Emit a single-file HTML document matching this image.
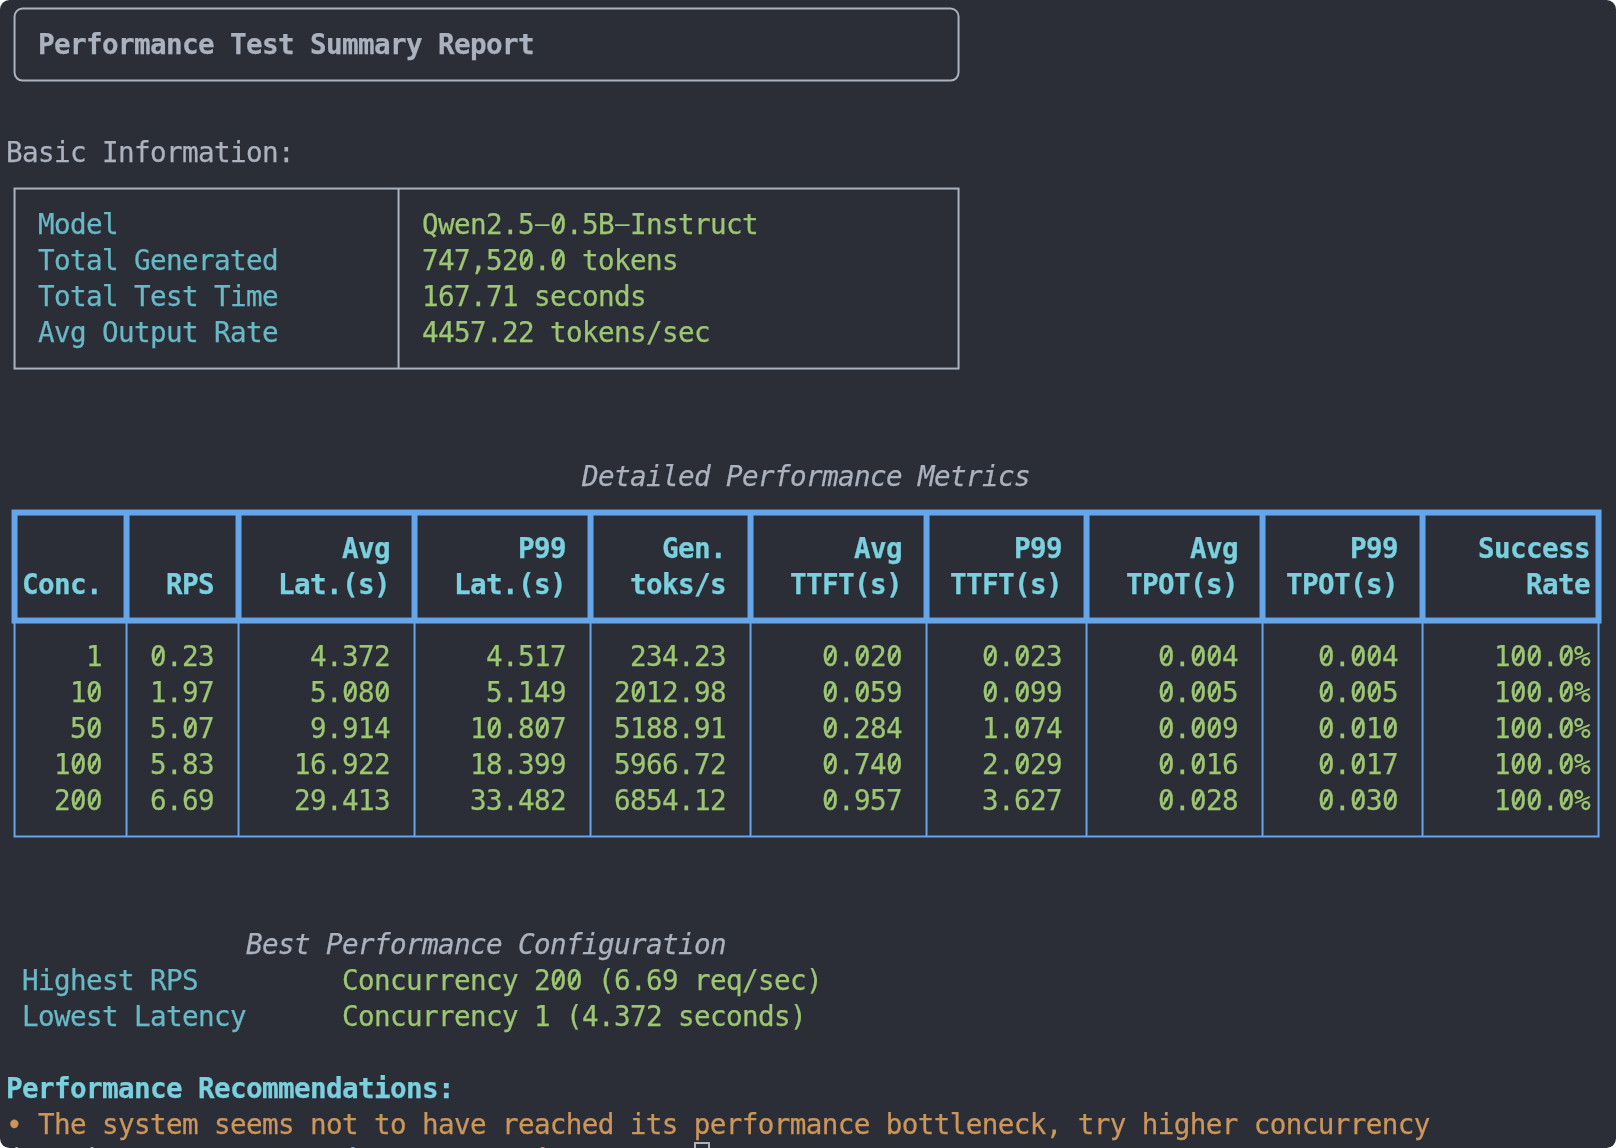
<!DOCTYPE html>
<html><head><meta charset="utf-8"><title>Performance Test Summary Report</title>
<style>
html,body{margin:0;padding:0;background:#fff;overflow:hidden;}
#term{position:absolute;left:0;top:0;width:1616px;height:1148px;background:#2b2e37;border-radius:9.5px;overflow:hidden;
font-family:"DejaVu Sans Mono","Liberation Mono",monospace;font-size:27.6px;}
.t{position:absolute;white-space:pre;line-height:36px;height:36px;letter-spacing:-0.6166px;margin-left:0px;margin-top:1.3px;-webkit-text-stroke:0.25px currentColor}
.hy{display:inline-block;width:16px;letter-spacing:0;-webkit-text-stroke:0;transform:translate(0px,-1.3px) scale(2.05,0.8);transform-origin:8.4px 18px}
.b{font-weight:bold} .i{font-style:italic}
.p{margin-top:0.2px} .p2{margin-left:-2px} .bl{color:#65a5ea} .red{color:#e06c75}
.fg{color:#abb2bf} .cy{color:#69b8c6} .cyb{color:#7ad0de} .gr{color:#9dc673} .or{color:#cc965b}
svg{position:absolute;left:0;top:0}
#txt{position:absolute;left:0;top:0;width:1616px;height:1148px;will-change:transform}
</style></head>
<body><div id="term">
<svg width="1616" height="1148" viewBox="0 0 1616 1148">
<rect x="14.55" y="8.55" width="944.0" height="72.0" rx="8" ry="8" fill="none" stroke="#abb2bf" stroke-width="2"/>
<rect x="14.55" y="188.55" width="944.0" height="180.0" fill="none" stroke="#abb2bf" stroke-width="2"/>
<line x1="398.55" y1="188.55" x2="398.55" y2="368.55" stroke="#abb2bf" stroke-width="2"/>
<rect x="14.55" y="512.55" width="1584.00" height="108.00" fill="none" stroke="#65a5ea" stroke-width="6"/>
<line x1="126.55" y1="512.55" x2="126.55" y2="620.55" stroke="#65a5ea" stroke-width="6"/>
<line x1="126.55" y1="620.55" x2="126.55" y2="836.55" stroke="#65a5ea" stroke-width="2"/>
<line x1="238.55" y1="512.55" x2="238.55" y2="620.55" stroke="#65a5ea" stroke-width="6"/>
<line x1="238.55" y1="620.55" x2="238.55" y2="836.55" stroke="#65a5ea" stroke-width="2"/>
<line x1="414.55" y1="512.55" x2="414.55" y2="620.55" stroke="#65a5ea" stroke-width="6"/>
<line x1="414.55" y1="620.55" x2="414.55" y2="836.55" stroke="#65a5ea" stroke-width="2"/>
<line x1="590.55" y1="512.55" x2="590.55" y2="620.55" stroke="#65a5ea" stroke-width="6"/>
<line x1="590.55" y1="620.55" x2="590.55" y2="836.55" stroke="#65a5ea" stroke-width="2"/>
<line x1="750.55" y1="512.55" x2="750.55" y2="620.55" stroke="#65a5ea" stroke-width="6"/>
<line x1="750.55" y1="620.55" x2="750.55" y2="836.55" stroke="#65a5ea" stroke-width="2"/>
<line x1="926.55" y1="512.55" x2="926.55" y2="620.55" stroke="#65a5ea" stroke-width="6"/>
<line x1="926.55" y1="620.55" x2="926.55" y2="836.55" stroke="#65a5ea" stroke-width="2"/>
<line x1="1086.55" y1="512.55" x2="1086.55" y2="620.55" stroke="#65a5ea" stroke-width="6"/>
<line x1="1086.55" y1="620.55" x2="1086.55" y2="836.55" stroke="#65a5ea" stroke-width="2"/>
<line x1="1262.55" y1="512.55" x2="1262.55" y2="620.55" stroke="#65a5ea" stroke-width="6"/>
<line x1="1262.55" y1="620.55" x2="1262.55" y2="836.55" stroke="#65a5ea" stroke-width="2"/>
<line x1="1422.55" y1="512.55" x2="1422.55" y2="620.55" stroke="#65a5ea" stroke-width="6"/>
<line x1="1422.55" y1="620.55" x2="1422.55" y2="836.55" stroke="#65a5ea" stroke-width="2"/>
<path d="M14.55 620.55V836.55H1598.55V620.55" fill="none" stroke="#65a5ea" stroke-width="2"/>
<line x1="555.4" y1="228.6" x2="561.6" y2="217.3" stroke="#9dc673" stroke-width="2.4"/>
<line x1="523.4" y1="264.6" x2="529.6" y2="253.3" stroke="#9dc673" stroke-width="2.4"/>
<line x1="555.4" y1="264.6" x2="561.6" y2="253.3" stroke="#9dc673" stroke-width="2.4"/>
<line x1="155.4" y1="660.6" x2="161.6" y2="649.3" stroke="#9dc673" stroke-width="2.4"/>
<line x1="827.4" y1="660.6" x2="833.6" y2="649.3" stroke="#9dc673" stroke-width="2.4"/>
<line x1="859.4" y1="660.6" x2="865.6" y2="649.3" stroke="#9dc673" stroke-width="2.4"/>
<line x1="891.4" y1="660.6" x2="897.6" y2="649.3" stroke="#9dc673" stroke-width="2.4"/>
<line x1="987.4" y1="660.6" x2="993.6" y2="649.3" stroke="#9dc673" stroke-width="2.4"/>
<line x1="1019.4" y1="660.6" x2="1025.6" y2="649.3" stroke="#9dc673" stroke-width="2.4"/>
<line x1="1163.4" y1="660.6" x2="1169.6" y2="649.3" stroke="#9dc673" stroke-width="2.4"/>
<line x1="1195.4" y1="660.6" x2="1201.6" y2="649.3" stroke="#9dc673" stroke-width="2.4"/>
<line x1="1211.4" y1="660.6" x2="1217.6" y2="649.3" stroke="#9dc673" stroke-width="2.4"/>
<line x1="1323.4" y1="660.6" x2="1329.6" y2="649.3" stroke="#9dc673" stroke-width="2.4"/>
<line x1="1355.4" y1="660.6" x2="1361.6" y2="649.3" stroke="#9dc673" stroke-width="2.4"/>
<line x1="1371.4" y1="660.6" x2="1377.6" y2="649.3" stroke="#9dc673" stroke-width="2.4"/>
<line x1="1515.4" y1="660.6" x2="1521.6" y2="649.3" stroke="#9dc673" stroke-width="2.4"/>
<line x1="1531.4" y1="660.6" x2="1537.6" y2="649.3" stroke="#9dc673" stroke-width="2.4"/>
<line x1="1563.4" y1="660.6" x2="1569.6" y2="649.3" stroke="#9dc673" stroke-width="2.4"/>
<line x1="91.4" y1="696.6" x2="97.6" y2="685.3" stroke="#9dc673" stroke-width="2.4"/>
<line x1="347.4" y1="696.6" x2="353.6" y2="685.3" stroke="#9dc673" stroke-width="2.4"/>
<line x1="379.4" y1="696.6" x2="385.6" y2="685.3" stroke="#9dc673" stroke-width="2.4"/>
<line x1="635.4" y1="696.6" x2="641.6" y2="685.3" stroke="#9dc673" stroke-width="2.4"/>
<line x1="827.4" y1="696.6" x2="833.6" y2="685.3" stroke="#9dc673" stroke-width="2.4"/>
<line x1="859.4" y1="696.6" x2="865.6" y2="685.3" stroke="#9dc673" stroke-width="2.4"/>
<line x1="987.4" y1="696.6" x2="993.6" y2="685.3" stroke="#9dc673" stroke-width="2.4"/>
<line x1="1019.4" y1="696.6" x2="1025.6" y2="685.3" stroke="#9dc673" stroke-width="2.4"/>
<line x1="1163.4" y1="696.6" x2="1169.6" y2="685.3" stroke="#9dc673" stroke-width="2.4"/>
<line x1="1195.4" y1="696.6" x2="1201.6" y2="685.3" stroke="#9dc673" stroke-width="2.4"/>
<line x1="1211.4" y1="696.6" x2="1217.6" y2="685.3" stroke="#9dc673" stroke-width="2.4"/>
<line x1="1323.4" y1="696.6" x2="1329.6" y2="685.3" stroke="#9dc673" stroke-width="2.4"/>
<line x1="1355.4" y1="696.6" x2="1361.6" y2="685.3" stroke="#9dc673" stroke-width="2.4"/>
<line x1="1371.4" y1="696.6" x2="1377.6" y2="685.3" stroke="#9dc673" stroke-width="2.4"/>
<line x1="1515.4" y1="696.6" x2="1521.6" y2="685.3" stroke="#9dc673" stroke-width="2.4"/>
<line x1="1531.4" y1="696.6" x2="1537.6" y2="685.3" stroke="#9dc673" stroke-width="2.4"/>
<line x1="1563.4" y1="696.6" x2="1569.6" y2="685.3" stroke="#9dc673" stroke-width="2.4"/>
<line x1="91.4" y1="732.6" x2="97.6" y2="721.3" stroke="#9dc673" stroke-width="2.4"/>
<line x1="187.4" y1="732.6" x2="193.6" y2="721.3" stroke="#9dc673" stroke-width="2.4"/>
<line x1="491.4" y1="732.6" x2="497.6" y2="721.3" stroke="#9dc673" stroke-width="2.4"/>
<line x1="539.4" y1="732.6" x2="545.6" y2="721.3" stroke="#9dc673" stroke-width="2.4"/>
<line x1="827.4" y1="732.6" x2="833.6" y2="721.3" stroke="#9dc673" stroke-width="2.4"/>
<line x1="1019.4" y1="732.6" x2="1025.6" y2="721.3" stroke="#9dc673" stroke-width="2.4"/>
<line x1="1163.4" y1="732.6" x2="1169.6" y2="721.3" stroke="#9dc673" stroke-width="2.4"/>
<line x1="1195.4" y1="732.6" x2="1201.6" y2="721.3" stroke="#9dc673" stroke-width="2.4"/>
<line x1="1211.4" y1="732.6" x2="1217.6" y2="721.3" stroke="#9dc673" stroke-width="2.4"/>
<line x1="1323.4" y1="732.6" x2="1329.6" y2="721.3" stroke="#9dc673" stroke-width="2.4"/>
<line x1="1355.4" y1="732.6" x2="1361.6" y2="721.3" stroke="#9dc673" stroke-width="2.4"/>
<line x1="1387.4" y1="732.6" x2="1393.6" y2="721.3" stroke="#9dc673" stroke-width="2.4"/>
<line x1="1515.4" y1="732.6" x2="1521.6" y2="721.3" stroke="#9dc673" stroke-width="2.4"/>
<line x1="1531.4" y1="732.6" x2="1537.6" y2="721.3" stroke="#9dc673" stroke-width="2.4"/>
<line x1="1563.4" y1="732.6" x2="1569.6" y2="721.3" stroke="#9dc673" stroke-width="2.4"/>
<line x1="75.4" y1="768.6" x2="81.6" y2="757.3" stroke="#9dc673" stroke-width="2.4"/>
<line x1="91.4" y1="768.6" x2="97.6" y2="757.3" stroke="#9dc673" stroke-width="2.4"/>
<line x1="827.4" y1="768.6" x2="833.6" y2="757.3" stroke="#9dc673" stroke-width="2.4"/>
<line x1="891.4" y1="768.6" x2="897.6" y2="757.3" stroke="#9dc673" stroke-width="2.4"/>
<line x1="1019.4" y1="768.6" x2="1025.6" y2="757.3" stroke="#9dc673" stroke-width="2.4"/>
<line x1="1163.4" y1="768.6" x2="1169.6" y2="757.3" stroke="#9dc673" stroke-width="2.4"/>
<line x1="1195.4" y1="768.6" x2="1201.6" y2="757.3" stroke="#9dc673" stroke-width="2.4"/>
<line x1="1323.4" y1="768.6" x2="1329.6" y2="757.3" stroke="#9dc673" stroke-width="2.4"/>
<line x1="1355.4" y1="768.6" x2="1361.6" y2="757.3" stroke="#9dc673" stroke-width="2.4"/>
<line x1="1515.4" y1="768.6" x2="1521.6" y2="757.3" stroke="#9dc673" stroke-width="2.4"/>
<line x1="1531.4" y1="768.6" x2="1537.6" y2="757.3" stroke="#9dc673" stroke-width="2.4"/>
<line x1="1563.4" y1="768.6" x2="1569.6" y2="757.3" stroke="#9dc673" stroke-width="2.4"/>
<line x1="75.4" y1="804.6" x2="81.6" y2="793.3" stroke="#9dc673" stroke-width="2.4"/>
<line x1="91.4" y1="804.6" x2="97.6" y2="793.3" stroke="#9dc673" stroke-width="2.4"/>
<line x1="827.4" y1="804.6" x2="833.6" y2="793.3" stroke="#9dc673" stroke-width="2.4"/>
<line x1="1163.4" y1="804.6" x2="1169.6" y2="793.3" stroke="#9dc673" stroke-width="2.4"/>
<line x1="1195.4" y1="804.6" x2="1201.6" y2="793.3" stroke="#9dc673" stroke-width="2.4"/>
<line x1="1323.4" y1="804.6" x2="1329.6" y2="793.3" stroke="#9dc673" stroke-width="2.4"/>
<line x1="1355.4" y1="804.6" x2="1361.6" y2="793.3" stroke="#9dc673" stroke-width="2.4"/>
<line x1="1387.4" y1="804.6" x2="1393.6" y2="793.3" stroke="#9dc673" stroke-width="2.4"/>
<line x1="1515.4" y1="804.6" x2="1521.6" y2="793.3" stroke="#9dc673" stroke-width="2.4"/>
<line x1="1531.4" y1="804.6" x2="1537.6" y2="793.3" stroke="#9dc673" stroke-width="2.4"/>
<line x1="1563.4" y1="804.6" x2="1569.6" y2="793.3" stroke="#9dc673" stroke-width="2.4"/>
<line x1="555.4" y1="984.6" x2="561.6" y2="973.3" stroke="#9dc673" stroke-width="2.4"/>
<line x1="571.4" y1="984.6" x2="577.6" y2="973.3" stroke="#9dc673" stroke-width="2.4"/>
<rect x="695" y="1143" width="14" height="34" fill="none" stroke="#abb2bf" stroke-width="2"/>
</svg>
<div id="txt">
<span class="t fg b" style="left:38px;top:26px">Performance Test Summary Report</span>
<span class="t fg" style="left:6px;top:134px">Basic Information:</span>
<span class="t cy" style="left:38px;top:206px">Model</span>
<span class="t gr" style="left:422px;top:206px">Qwen2.5<span class="hy">-</span>0.5B<span class="hy">-</span>Instruct</span>
<span class="t cy" style="left:38px;top:242px">Total Generated</span>
<span class="t gr" style="left:422px;top:242px">747,520.0 tokens</span>
<span class="t cy" style="left:38px;top:278px">Total Test Time</span>
<span class="t gr" style="left:422px;top:278px">167.71 seconds</span>
<span class="t cy" style="left:38px;top:314px">Avg Output Rate</span>
<span class="t gr" style="left:422px;top:314px">4457.22 tokens/sec</span>
<span class="t fg i" style="left:582px;top:458px">Detailed Performance Metrics</span>
<span class="t cyb b" style="left:22px;top:566px">Conc.</span>
<span class="t cyb b" style="left:166px;top:566px">RPS</span>
<span class="t cyb b" style="left:342px;top:530px">Avg</span>
<span class="t cyb b" style="left:278px;top:566px">Lat.(s)</span>
<span class="t cyb b" style="left:518px;top:530px">P99</span>
<span class="t cyb b" style="left:454px;top:566px">Lat.(s)</span>
<span class="t cyb b" style="left:662px;top:530px">Gen.</span>
<span class="t cyb b" style="left:630px;top:566px">toks/s</span>
<span class="t cyb b" style="left:854px;top:530px">Avg</span>
<span class="t cyb b" style="left:790px;top:566px">TTFT(s)</span>
<span class="t cyb b" style="left:1014px;top:530px">P99</span>
<span class="t cyb b" style="left:950px;top:566px">TTFT(s)</span>
<span class="t cyb b" style="left:1190px;top:530px">Avg</span>
<span class="t cyb b" style="left:1126px;top:566px">TPOT(s)</span>
<span class="t cyb b" style="left:1350px;top:530px">P99</span>
<span class="t cyb b" style="left:1286px;top:566px">TPOT(s)</span>
<span class="t cyb b" style="left:1478px;top:530px">Success</span>
<span class="t cyb b" style="left:1526px;top:566px">Rate</span>
<span class="t gr" style="left:86px;top:638px">1</span>
<span class="t gr" style="left:150px;top:638px">0.23</span>
<span class="t gr" style="left:310px;top:638px">4.372</span>
<span class="t gr" style="left:486px;top:638px">4.517</span>
<span class="t gr" style="left:630px;top:638px">234.23</span>
<span class="t gr" style="left:822px;top:638px">0.020</span>
<span class="t gr" style="left:982px;top:638px">0.023</span>
<span class="t gr" style="left:1158px;top:638px">0.004</span>
<span class="t gr" style="left:1318px;top:638px">0.004</span>
<span class="t gr" style="left:1494px;top:638px">100.0%</span>
<span class="t gr" style="left:70px;top:674px">10</span>
<span class="t gr" style="left:150px;top:674px">1.97</span>
<span class="t gr" style="left:310px;top:674px">5.080</span>
<span class="t gr" style="left:486px;top:674px">5.149</span>
<span class="t gr" style="left:614px;top:674px">2012.98</span>
<span class="t gr" style="left:822px;top:674px">0.059</span>
<span class="t gr" style="left:982px;top:674px">0.099</span>
<span class="t gr" style="left:1158px;top:674px">0.005</span>
<span class="t gr" style="left:1318px;top:674px">0.005</span>
<span class="t gr" style="left:1494px;top:674px">100.0%</span>
<span class="t gr" style="left:70px;top:710px">50</span>
<span class="t gr" style="left:150px;top:710px">5.07</span>
<span class="t gr" style="left:310px;top:710px">9.914</span>
<span class="t gr" style="left:470px;top:710px">10.807</span>
<span class="t gr" style="left:614px;top:710px">5188.91</span>
<span class="t gr" style="left:822px;top:710px">0.284</span>
<span class="t gr" style="left:982px;top:710px">1.074</span>
<span class="t gr" style="left:1158px;top:710px">0.009</span>
<span class="t gr" style="left:1318px;top:710px">0.010</span>
<span class="t gr" style="left:1494px;top:710px">100.0%</span>
<span class="t gr" style="left:54px;top:746px">100</span>
<span class="t gr" style="left:150px;top:746px">5.83</span>
<span class="t gr" style="left:294px;top:746px">16.922</span>
<span class="t gr" style="left:470px;top:746px">18.399</span>
<span class="t gr" style="left:614px;top:746px">5966.72</span>
<span class="t gr" style="left:822px;top:746px">0.740</span>
<span class="t gr" style="left:982px;top:746px">2.029</span>
<span class="t gr" style="left:1158px;top:746px">0.016</span>
<span class="t gr" style="left:1318px;top:746px">0.017</span>
<span class="t gr" style="left:1494px;top:746px">100.0%</span>
<span class="t gr" style="left:54px;top:782px">200</span>
<span class="t gr" style="left:150px;top:782px">6.69</span>
<span class="t gr" style="left:294px;top:782px">29.413</span>
<span class="t gr" style="left:470px;top:782px">33.482</span>
<span class="t gr" style="left:614px;top:782px">6854.12</span>
<span class="t gr" style="left:822px;top:782px">0.957</span>
<span class="t gr" style="left:982px;top:782px">3.627</span>
<span class="t gr" style="left:1158px;top:782px">0.028</span>
<span class="t gr" style="left:1318px;top:782px">0.030</span>
<span class="t gr" style="left:1494px;top:782px">100.0%</span>
<span class="t fg i" style="left:246px;top:926px">Best Performance Configuration</span>
<span class="t cy" style="left:22px;top:962px">Highest RPS</span>
<span class="t gr" style="left:342px;top:962px">Concurrency 200 (6.69 req/sec)</span>
<span class="t cy" style="left:22px;top:998px">Lowest Latency</span>
<span class="t gr" style="left:342px;top:998px">Concurrency 1 (4.372 seconds)</span>
<span class="t cyb b" style="left:6px;top:1070px">Performance Recommendations:</span>
<span class="t or" style="left:6px;top:1106px">• The system seems not to have reached its performance bottleneck, try higher concurrency</span>
<span class="t fg p" style="left:6px;top:1142px">(</span>
<span class="t fg p" style="left:86px;top:1142px">)</span>
<span class="t bl b p" style="left:342px;top:1142px">(</span>
<span class="t red b p p2" style="left:534px;top:1142px">(</span>
</div>
</div></body></html>
